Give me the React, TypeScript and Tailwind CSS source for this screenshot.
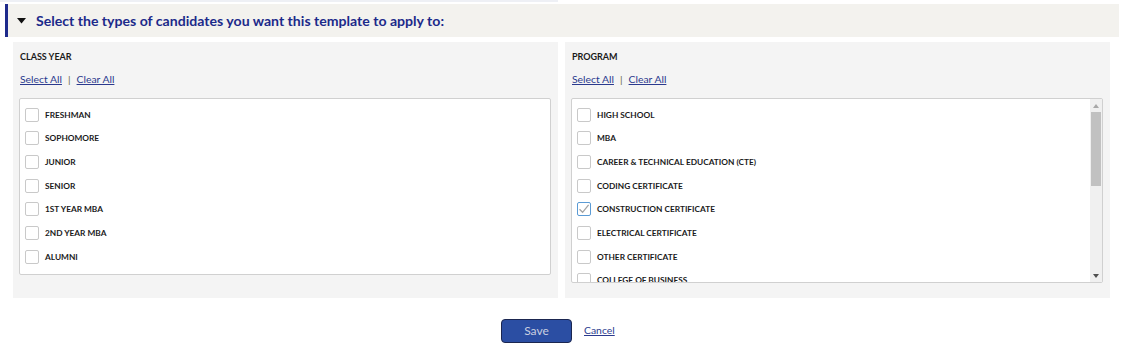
import React from "react";

const font = { fontFamily: 'Lato, "Open Sans", Arial, sans-serif' };

const classYears = ["FRESHMAN", "SOPHOMORE", "JUNIOR", "SENIOR", "1ST YEAR MBA", "2ND YEAR MBA", "ALUMNI"];
const programs = [
  { label: "HIGH SCHOOL" },
  { label: "MBA" },
  { label: "CAREER & TECHNICAL EDUCATION (CTE)" },
  { label: "CODING CERTIFICATE" },
  { label: "CONSTRUCTION CERTIFICATE", checked: true },
  { label: "ELECTRICAL CERTIFICATE" },
  { label: "OTHER CERTIFICATE" },
  { label: "COLLEGE OF BUSINESS" },
];

function Check({ checked }: { checked?: boolean }) {
  return (
    <div
      className={
        "w-[14px] h-[14px] shrink-0 rounded-[2px] bg-white border flex items-center justify-center " +
        (checked ? "border-[#5b9bd5]" : "border-[#c9c9c9]")
      }
    >
      {checked && (
        <svg width="12" height="12" viewBox="0 0 12 12">
          <path d="M1.5 6.2 L4.6 9.3 L10.6 1.8" fill="none" stroke="#a3a3a3" strokeWidth="1.3" />
        </svg>
      )}
    </div>
  );
}

function Row({ label, checked }: { label: string; checked?: boolean }) {
  return (
    <div className="h-[23.67px] flex items-center gap-[6px] pl-[5px] shrink-0">
      <Check checked={checked} />
      <span className="text-[8.3px] font-bold text-[#1a1a1a] whitespace-nowrap">{label}</span>
    </div>
  );
}

function Panel({ title, children }: { title: string; children: React.ReactNode }) {
  return (
    <div className="w-[545px] h-[256px] bg-[#f4f4f4] pl-[6px] pr-[7px] flex flex-col">
      <div className="h-[27px] pt-[8px] pl-[1px] text-[9px] font-bold text-[#1a1a1a]">{title}</div>
      <div className="h-[29px] flex items-start pt-[3px] pl-[1px] text-[10.4px] text-[#2b3a8e]">
        <span className="underline">Select All</span>
        <span className="mx-[6px] text-[#6d6448]">|</span>
        <span className="underline">Clear All</span>
      </div>
      {children}
    </div>
  );
}

export default function App() {
  return (
    <div className="w-[1125px] h-[359px] bg-white" style={font}>
      <div className="w-[558px] h-[2px] bg-[#eef0f5]" />
      <div className="h-[2px]" />
      <div className="ml-[5px] w-[1114px] h-[33px] bg-[#f3f2ee] border-l-[3px] border-[#1e2a8b] flex items-center pl-[9px]">
        <svg width="9" height="6" viewBox="0 0 9 6" className="mr-[10px]">
          <path d="M0 0 L9 0 L4.5 5.5 Z" fill="#111" />
        </svg>
        <span className="text-[14.1px] font-bold text-[#1c2a8a] whitespace-nowrap">
          Select the types of candidates you want this template to apply to:
        </span>
      </div>
      <div className="ml-[13px] mt-[5px] flex gap-[7px]">
        <Panel title="CLASS YEAR">
          <div className="h-[177px] bg-white border border-[#d0d0d0] rounded-[2px] pt-[4px] flex flex-col">
            {classYears.map((c) => (
              <Row key={c} label={c} />
            ))}
          </div>
        </Panel>
        <Panel title="PROGRAM">
          <div className="h-[185px] bg-white border border-[#d0d0d0] rounded-[2px] flex overflow-hidden">
            <div className="flex-1 pt-[4px] flex flex-col overflow-hidden">
              {programs.map((p) => (
                <Row key={p.label} label={p.label} checked={p.checked} />
              ))}
            </div>
            <div className="w-[12px] bg-[#f0f0f0] flex flex-col items-center">
              <div className="h-[13px] flex items-center justify-center">
                <svg width="6" height="4" viewBox="0 0 6 4">
                  <path d="M0 4 L6 4 L3 0 Z" fill="#a8a8a8" />
                </svg>
              </div>
              <div className="w-[10px] h-[74px] bg-[#c1c1c1]" />
              <div className="flex-1" />
              <div className="h-[13px] flex items-center justify-center">
                <svg width="6" height="4" viewBox="0 0 6 4">
                  <path d="M0 0 L6 0 L3 4 Z" fill="#505050" />
                </svg>
              </div>
            </div>
          </div>
        </Panel>
      </div>
      <div className="mt-[21px] pl-[501px] flex items-center gap-[12px]">
        <button className="w-[71px] h-[24px] rounded-[4px] bg-[#2b4ea3] border border-[#1b2650] text-[12px] text-[#c9cfe0]">
          Save
        </button>
        <span className="text-[10.4px] text-[#2b3a8e] underline">Cancel</span>
      </div>
    </div>
  );
}
